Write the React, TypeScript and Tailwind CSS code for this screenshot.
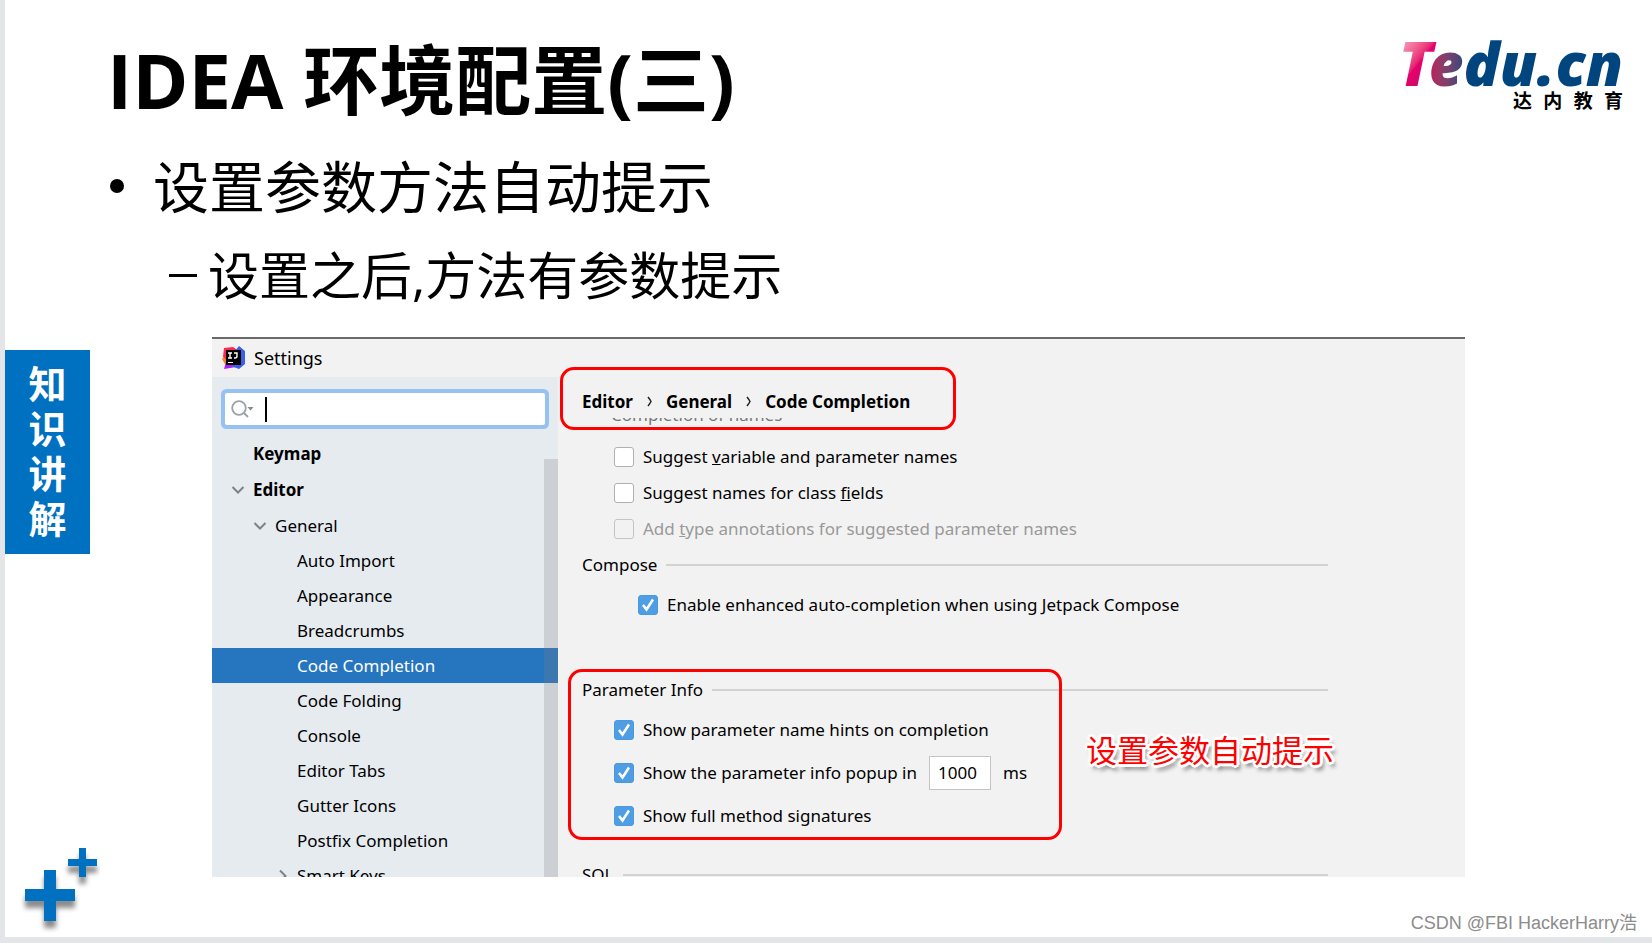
import React from 'react';

interface TreeItem {
  label: string;
  level: 'root' | 'group' | 'leaf';
  open?: boolean;
  closed?: boolean;
  selected?: boolean;
}

const TREE: TreeItem[] = [
  { label: 'Keymap', level: 'root' },
  { label: 'Editor', level: 'root', open: true },
  { label: 'General', level: 'group', open: true },
  { label: 'Auto Import', level: 'leaf' },
  { label: 'Appearance', level: 'leaf' },
  { label: 'Breadcrumbs', level: 'leaf' },
  { label: 'Code Completion', level: 'leaf', selected: true },
  { label: 'Code Folding', level: 'leaf' },
  { label: 'Console', level: 'leaf' },
  { label: 'Editor Tabs', level: 'leaf' },
  { label: 'Gutter Icons', level: 'leaf' },
  { label: 'Postfix Completion', level: 'leaf' },
  { label: 'Smart Keys', level: 'leaf', closed: true },
];

const TREE_INDENT = {
  root: 'pl-[19px] font-bold h-9',
  group: 'pl-[41px] h-[35px]',
  leaf: 'pl-[63px] h-[35px]',
};

const Logo: React.FC = () => (
  <div className="flex flex-col items-end">
    <div className="flex items-baseline font-extrabold italic leading-[52px]">
      <span className="-mr-3 bg-linear-to-br from-[#f6b3cd] via-[#e5006e] to-[#b0115c] bg-clip-text pr-2 text-[62px] text-transparent">T</span>
      <span className="bg-linear-to-r from-[#c0135a] via-[#00457e] via-20% to-[#00457e] bg-clip-text pr-1 text-[60px] text-transparent">edu.cn</span>
    </div>
    <div className="mr-1 flex w-[110px] justify-between text-[19px] font-bold leading-6 text-black">
      <span>达</span>
      <span>内</span>
      <span>教</span>
      <span>育</span>
    </div>
  </div>
);

const PlusMarks: React.FC = () => (
  <svg width="85" height="94" viewBox="0 0 85 94" className="ml-[10px]" aria-hidden="true">
    <defs>
      <filter id="plus-shadow" x="-30%" y="-30%" width="160%" height="180%">
        <feDropShadow dx="0" dy="7" stdDeviation="2.5" floodColor="#000" floodOpacity="0.45" />
      </filter>
    </defs>
    <path filter="url(#plus-shadow)" fill="#0070c0" d="M29 27h12v19h19v12H41v20H29V58H10V46h19z" />
    <path filter="url(#plus-shadow)" fill="#0070c0" d="M64 5h7v11h11v7H71v11h-7V23H53v-7h11z" />
  </svg>
);

const IdeaIcon: React.FC = () => (
  <svg width="24" height="24" viewBox="0 0 24 24" aria-hidden="true">
    <path fill="#fc801d" d="M5 8 0 13l3 5 6-3z" />
    <path fill="#fe2857" d="M2 2 11 1l6 4v6l-8 6-8-6z" />
    <path fill="#af1df5" d="M2 23 4 16l7 1 3 4-6 1z" />
    <path fill="#3b5fe8" d="m17 0 6 5v13l-6 5-8-3V5h4z" />
    <path fill="#000" d="M4 4h15v15H4z" />
    <path fill="none" stroke="#fff" strokeWidth="1.4" d="M6 7h4M8 7v5M6 12h4M12 7h3v3q0 2-2 2h-1" />
    <path fill="#fff" d="M6 16h5v1H6z" />
  </svg>
);

const Chevron: React.FC<{ closed?: boolean }> = ({ closed }) => (
  <svg width="14" height="14" viewBox="0 0 14 14" fill="none" stroke="#7f8285" strokeWidth="2" aria-hidden="true">
    <path d={closed ? 'M5 1.500 10.500 7 5 12.500' : 'M1.500 4 7 9.500 12.500 4'} />
  </svg>
);

const Separator: React.FC = () => (
  <svg width="5" height="11" viewBox="0 0 5 11" fill="none" stroke="#222" strokeWidth="1.500" aria-hidden="true">
    <path d="M1 1q2 2.500 3 4.500-1 2-3 4.500" />
  </svg>
);

interface OptionProps {
  id: string;
  checked?: boolean;
  disabled?: boolean;
  children: React.ReactNode;
}

const Option: React.FC<OptionProps> = ({ id, checked, disabled, children }) => (
  <div className="flex items-center gap-[9px]">
    <span className="relative flex">
      <input
        id={id}
        type="checkbox"
        defaultChecked={checked}
        disabled={disabled}
        className="peer size-5 appearance-none rounded-[3px] border border-[#b0b0b0] bg-white checked:border-[#4a98e0] checked:bg-[#4f9ee3] disabled:border-[#c4c4c4] disabled:bg-[#f2f2f2]"
      />
      <svg
        viewBox="0 0 20 20"
        fill="none"
        stroke="#fff"
        strokeWidth="2.5"
        className="pointer-events-none absolute inset-0 hidden peer-checked:block"
        aria-hidden="true"
      >
        <path d="m5 10 3.500 4.500L15 4.500" />
      </svg>
    </span>
    <label htmlFor={id} className={disabled ? 'text-[#999]' : ''}>{children}</label>
  </div>
);

const SectionTitle: React.FC<{ title: string }> = ({ title }) => (
  <div className="flex h-6 items-center gap-[9px]">
    <h3>{title}</h3>
    <hr className="h-0.5 flex-1 border-0 bg-[#d2d2d2]" />
  </div>
);

const Sidebar: React.FC = () => (
  <div className="relative w-[346px] shrink-0 bg-[#e6ebf0]">
    <div className="mx-[13px] mt-4 flex h-8 items-center rounded-xs bg-white pl-1.5 ring-4 ring-[#97c1f1]">
      <svg width="24" height="20" viewBox="0 0 24 20" fill="none" stroke="#9aa2a8" strokeWidth="1.800" aria-hidden="true">
        <circle cx="8" cy="9" r="6.800" />
        <path d="m13 14 4 4" />
        <path d="M16.500 8h6L19.500 11.500z" fill="#7f8b91" stroke="none" />
      </svg>
      <span className="ml-[10px] h-[25px] w-0.5 bg-black" />
      <input type="text" aria-label="Search settings" className="h-full min-w-0 flex-1 bg-transparent outline-none" />
    </div>
    <ul className="mt-[11px]">
      {TREE.map((item) => (
        <li key={item.label}>
          <button
            type="button"
            className={`flex w-full items-center gap-2 text-left ${TREE_INDENT[item.level]} ${item.selected ? 'bg-[#2675bf] text-white' : ''}`}
          >
            <span className="flex w-[14px]">{(item.open || item.closed) && <Chevron closed={item.closed} />}</span>
            {item.label}
          </button>
        </li>
      ))}
    </ul>
    <div className="absolute top-[82px] right-0 bottom-0 w-[14px] bg-[#7f7f7f]/25" />
  </div>
);

const CompletionPage: React.FC = () => (
  <div className="min-w-0 flex-1 pr-[137px] pl-6">
    <nav className="relative flex h-[41px] w-fit items-center gap-[14px] pt-2 font-bold">
      <a href="#editor">Editor</a>
      <Separator />
      <a href="#general">General</a>
      <Separator />
      <a href="#completion">Code Completion</a>
      <div className="pointer-events-none absolute -top-[10px] -right-[46px] -left-[22px] z-10 h-[63px] rounded-[14px] border-3 border-[#ff0000]" />
    </nav>
    <div className="h-[10px] overflow-hidden pl-[29px]">
      <p className="-mt-[15px] leading-6 text-[#777]">Completion of names</p>
    </div>
    <div className="mt-[11px] pl-8">
      <div className="flex h-9 items-center">
        <Option id="suggest-variable">Suggest <u>v</u>ariable and parameter names</Option>
      </div>
      <div className="flex h-9 items-center">
        <Option id="suggest-fields">Suggest names for class <u>f</u>ields</Option>
      </div>
      <div className="flex h-9 items-center">
        <Option id="annotations" disabled>Add <u>t</u>ype annotations for suggested parameter names</Option>
      </div>
    </div>
    <div className="mt-[6px]">
      <SectionTitle title="Compose" />
      <div className="mt-[10px] flex h-9 items-center pl-14">
        <Option id="jetpack" checked>Enable enhanced auto-completion when using Jetpack Compose</Option>
      </div>
    </div>
    <div className="relative mt-[55px]">
      <SectionTitle title="Parameter Info" />
      <div className="mt-[6px] pl-8">
        <div className="flex h-[43px] items-center">
          <Option id="hints" checked>Show parameter name hints on completion</Option>
        </div>
        <div className="flex h-[43px] items-center">
          <Option id="popup" checked>Show the parameter info popup in</Option>
          <input
            type="text"
            defaultValue="1000"
            aria-label="Popup delay"
            className="mx-3 h-[34px] w-[62px] border border-[#c4c4c4] bg-white px-2 outline-none"
          />
          <span>ms</span>
        </div>
        <div className="flex h-[43px] items-center">
          <Option id="signatures" checked>Show full method signatures</Option>
        </div>
      </div>
      <div className="pointer-events-none absolute -top-[9px] -left-[14px] h-[171px] w-[494px] rounded-[14px] border-3 border-[#ff0000]" />
      <p className="absolute top-12 left-[504px] whitespace-nowrap font-['Noto_Sans_CJK_SC',sans-serif] text-[31px] leading-[46px] text-[#ff0000] [text-shadow:3px_0_white,-3px_0_white,0_3px_white,0_-3px_white,2px_2px_white,-2px_-2px_white,2px_-2px_white,-2px_2px_white,3px_5px_4px_#555]">
        设置参数自动提示
      </p>
    </div>
    <div className="mt-[26px]">
      <SectionTitle title="SQL" />
    </div>
  </div>
);

const App: React.FC = () => (
  <div className="flex min-h-screen flex-col bg-[#e3e5e8] pb-[6px] pl-[5px] font-['Open_Sans','Noto_Sans_CJK_SC',sans-serif] text-black">
    <main className="relative flex flex-1 bg-white">
      <aside className="flex w-[85px] shrink-0 flex-col justify-between pt-[350px]">
        <p className="flex h-[204px] flex-col items-center justify-center bg-[#0070c0] pb-0.5 text-[38px] leading-[45px] font-bold text-white">
          <span>知</span>
          <span>识</span>
          <span>讲</span>
          <span>解</span>
        </p>
        <div className="-mr-3">
          <PlusMarks />
        </div>
      </aside>
      <div className="min-w-0 flex-1">
        <header className="flex h-[132px] justify-between pt-8 pr-[25px] pl-[17px]">
          <h1 className="text-[76px] leading-[96px] font-bold">IDEA 环境配置(三)</h1>
          <div className="pt-1">
            <Logo />
          </div>
        </header>
        <ul className="pl-5">
          <li className="mt-4 flex items-center text-[56px] leading-[76px]">
            <span className="mr-[29px] size-[14px] rounded-full bg-black" />
            设置参数方法自动提示
          </li>
          <li className="mt-[13px] flex items-center pl-[59px] text-[51px] leading-[76px]">
            <span className="mr-[11px] h-[3px] w-7 bg-black" />
            设置之后,方法有参数提示
          </li>
        </ul>
        <section className="mt-6 mr-[187px] ml-[122px] flex h-[540px] flex-col overflow-hidden border-t-2 border-[#6a6a6a] bg-[#f2f2f2] font-['Noto_Sans','Noto_Sans_CJK_SC',sans-serif] text-[17px]">
          <div className="flex h-[38px] shrink-0 items-center gap-2 pl-[10px] text-[18px]">
            <IdeaIcon />
            <h2>Settings</h2>
          </div>
          <div className="flex min-h-0 flex-1">
            <Sidebar />
            <CompletionPage />
          </div>
        </section>
      </div>
      <p className="absolute right-[15px] bottom-0 font-['Liberation_Sans','Noto_Sans_CJK_SC',sans-serif] text-[18px] leading-7 text-[#8c8c8c]">
        CSDN @FBI HackerHarry浩
      </p>
    </main>
  </div>
);

export default App;
